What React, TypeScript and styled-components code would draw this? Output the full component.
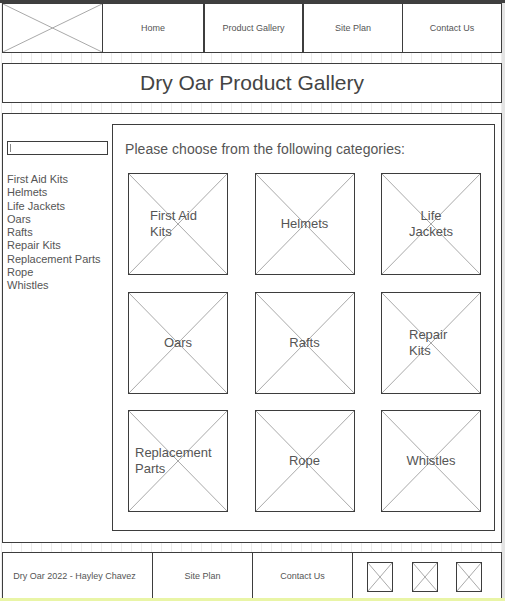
import styled, { createGlobalStyle } from "styled-components";

const GlobalStyle = createGlobalStyle`
    html, body {
        margin: 0;
        padding: 0;
        background: #ffffff;
    }
    #root {
        width: 505px;
        height: 601px;
        overflow: hidden;
    }
`;

const line = "#3d3d3d";
const textColor = "#4a4a4a";

const categories = [
    "First Aid Kits",
    "Helmets",
    "Life Jackets",
    "Oars",
    "Rafts",
    "Repair Kits",
    "Replacement Parts",
    "Rope",
    "Whistles",
];

// label width / alignment mimic how the wireframe wraps each caption
const tiles: { label: string; width: number; align: "left" | "center" }[] = [
    { label: "First Aid Kits", width: 56, align: "left" },
    { label: "Helmets", width: 60, align: "center" },
    { label: "Life Jackets", width: 52, align: "center" },
    { label: "Oars", width: 60, align: "center" },
    { label: "Rafts", width: 60, align: "center" },
    { label: "Repair Kits", width: 44, align: "left" },
    { label: "Replacement Parts", width: 86, align: "left" },
    { label: "Rope", width: 60, align: "center" },
    { label: "Whistles", width: 60, align: "center" },
];

function Cross() {
    return (
        <CrossSvg viewBox="0 0 100 100" preserveAspectRatio="none">
            <line x1="0" y1="0" x2="100" y2="100" vectorEffect="non-scaling-stroke" />
            <line x1="100" y1="0" x2="0" y2="100" vectorEffect="non-scaling-stroke" />
        </CrossSvg>
    );
}

export default function App() {
    return (
        <>
            <GlobalStyle />
            <Page>
                <TopStrip />
                <Canvas>
                    <Header>
                        <LogoCell>
                            <Cross />
                        </LogoCell>
                        <NavCell $thick={false}>Home</NavCell>
                        <NavCell $thick>Product Gallery</NavCell>
                        <NavCell $thick>Site Plan</NavCell>
                        <NavCell $thick={false}>Contact Us</NavCell>
                    </Header>

                    <TitleBar>Dry Oar Product Gallery</TitleBar>

                    <Main>
                        <Sidebar>
                            <Search>
                                <Caret />
                            </Search>
                            <CategoryList>
                                {categories.map((c) => (
                                    <li key={c}>{c}</li>
                                ))}
                            </CategoryList>
                        </Sidebar>
                        <Panel>
                            <Prompt>Please choose from the following categories:</Prompt>
                            <TileGrid>
                                {tiles.map((t) => (
                                    <Tile key={t.label}>
                                        <Cross />
                                        <TileLabel $width={t.width} $align={t.align}>
                                            {t.label}
                                        </TileLabel>
                                    </Tile>
                                ))}
                            </TileGrid>
                        </Panel>
                    </Main>

                    <Footer>
                        <FooterCell $lead>Dry Oar 2022 - Hayley Chavez</FooterCell>
                        <FooterCell $lead={false}>Site Plan</FooterCell>
                        <FooterCell $lead={false}>Contact Us</FooterCell>
                        <SocialCell>
                            <SocialIcon>
                                <Cross />
                            </SocialIcon>
                            <SocialIcon>
                                <Cross />
                            </SocialIcon>
                            <SocialIcon>
                                <Cross />
                            </SocialIcon>
                        </SocialCell>
                    </Footer>
                </Canvas>
                <BottomStrip />
            </Page>
        </>
    );
}

const Page = styled.div`
    width: 505px;
    height: 601px;
    display: flex;
    flex-direction: column;
    font-family: "Liberation Sans", Arial, sans-serif;
    color: ${textColor};
    background-color: #ffffff;
    background-image: repeating-linear-gradient(
        to right,
        #ececec 0px,
        #ececec 1px,
        transparent 1px,
        transparent 10px
    );
    background-position: 1px 0;
    box-shadow: inset -3px 0 0 #e4e4e4;
`;

const TopStrip = styled.div`
    height: 3px;
    flex: none;
    background: #3f3f3f;
`;

const BottomStrip = styled.div`
    height: 3px;
    flex: none;
    background: #e9f5a6;
`;

const Canvas = styled.div`
    flex: 1;
    min-height: 0;
    padding: 0 3px 0 2px;
    display: flex;
    flex-direction: column;
    overflow: hidden;
`;

const CrossSvg = styled.svg`
    position: absolute;
    inset: 0;
    width: 100%;
    height: 100%;
    pointer-events: none;

    line {
        stroke: #a9a9a9;
        stroke-width: 1;
    }
`;

const Header = styled.header`
    height: 50px;
    flex: none;
    display: grid;
    grid-template-columns: 99px 101px 99px 100px 1fr;
    border: 1px solid ${line};
    box-sizing: border-box;
    background: #fff;
`;

const LogoCell = styled.div`
    position: relative;
`;

const NavCell = styled.div<{ $thick: boolean }>`
    display: flex;
    align-items: center;
    justify-content: center;
    font-size: 9px;
    color: #555;
    border-left: ${(p) => (p.$thick ? 2 : 1)}px solid ${line};
`;

const TitleBar = styled.div`
    margin-top: 10px;
    height: 40px;
    flex: none;
    box-sizing: border-box;
    border: 1px solid ${line};
    background: #fff;
    display: flex;
    align-items: center;
    justify-content: center;
    font-size: 21px;
    color: #444;
`;

const Main = styled.main`
    margin-top: 10px;
    height: 430px;
    flex: none;
    box-sizing: border-box;
    border: 1px solid ${line};
    background: #fff;
    display: flex;
    padding: 10px 6px 11px 0;
`;

const Sidebar = styled.aside`
    width: 109px;
    flex: none;
    padding: 17px 0 0 4px;
    box-sizing: border-box;
`;

const Search = styled.div`
    width: 101px;
    height: 14px;
    box-sizing: border-box;
    border: 1px solid ${line};
    display: flex;
    align-items: center;
    padding-left: 2px;
`;

const Caret = styled.span`
    width: 1px;
    height: 8px;
    background: #888;
`;

const CategoryList = styled.ul`
    list-style: none;
    margin: 18px 0 0;
    padding: 0;
    font-size: 11px;
    line-height: 13.25px;
    color: #555;
`;

const Panel = styled.section`
    flex: 1;
    box-sizing: border-box;
    border: 1px solid ${line};
    padding: 15px 0 0 12px;
`;

const Prompt = styled.p`
    margin: 0;
    font-size: 14px;
    line-height: 18px;
    color: #555;
    letter-spacing: 0.05px;
`;

const TileGrid = styled.div`
    margin: 15px 0 0 3px;
    display: grid;
    grid-template-columns: 100px 100px 100px;
    grid-template-rows: 102px 102px 102px;
    column-gap: 26.5px;
    row-gap: 16.5px;
`;

const Tile = styled.div`
    position: relative;
    box-sizing: border-box;
    border: 1px solid ${line};
    display: flex;
    align-items: center;
    justify-content: center;
`;

const TileLabel = styled.span<{ $width: number; $align: "left" | "center" }>`
    position: relative;
    width: ${(p) => p.$width}px;
    text-align: ${(p) => p.$align};
    font-size: 13px;
    line-height: 16px;
    color: #555;
`;

const Footer = styled.footer`
    margin-top: 9px;
    height: 49px;
    flex: none;
    box-sizing: border-box;
    border: 1px solid ${line};
    border-bottom: none;
    background: #fff;
    display: grid;
    grid-template-columns: 149px 100px 100px 1fr;
`;

const FooterCell = styled.div<{ $lead: boolean }>`
    display: flex;
    align-items: center;
    justify-content: center;
    font-size: 9px;
    color: #555;
    padding-bottom: 3px;
    padding-right: ${(p) => (p.$lead ? 6 : 0)}px;

    & + & {
        border-left: 1px solid ${line};
    }
`;

const SocialCell = styled.div`
    border-left: 1px solid ${line};
    display: flex;
    align-items: flex-start;
    padding: 9px 0 0 14px;
    gap: 18.5px;
`;

const SocialIcon = styled.div`
    position: relative;
    width: 26px;
    height: 30px;
    box-sizing: border-box;
    border: 1px solid ${line};
`;
